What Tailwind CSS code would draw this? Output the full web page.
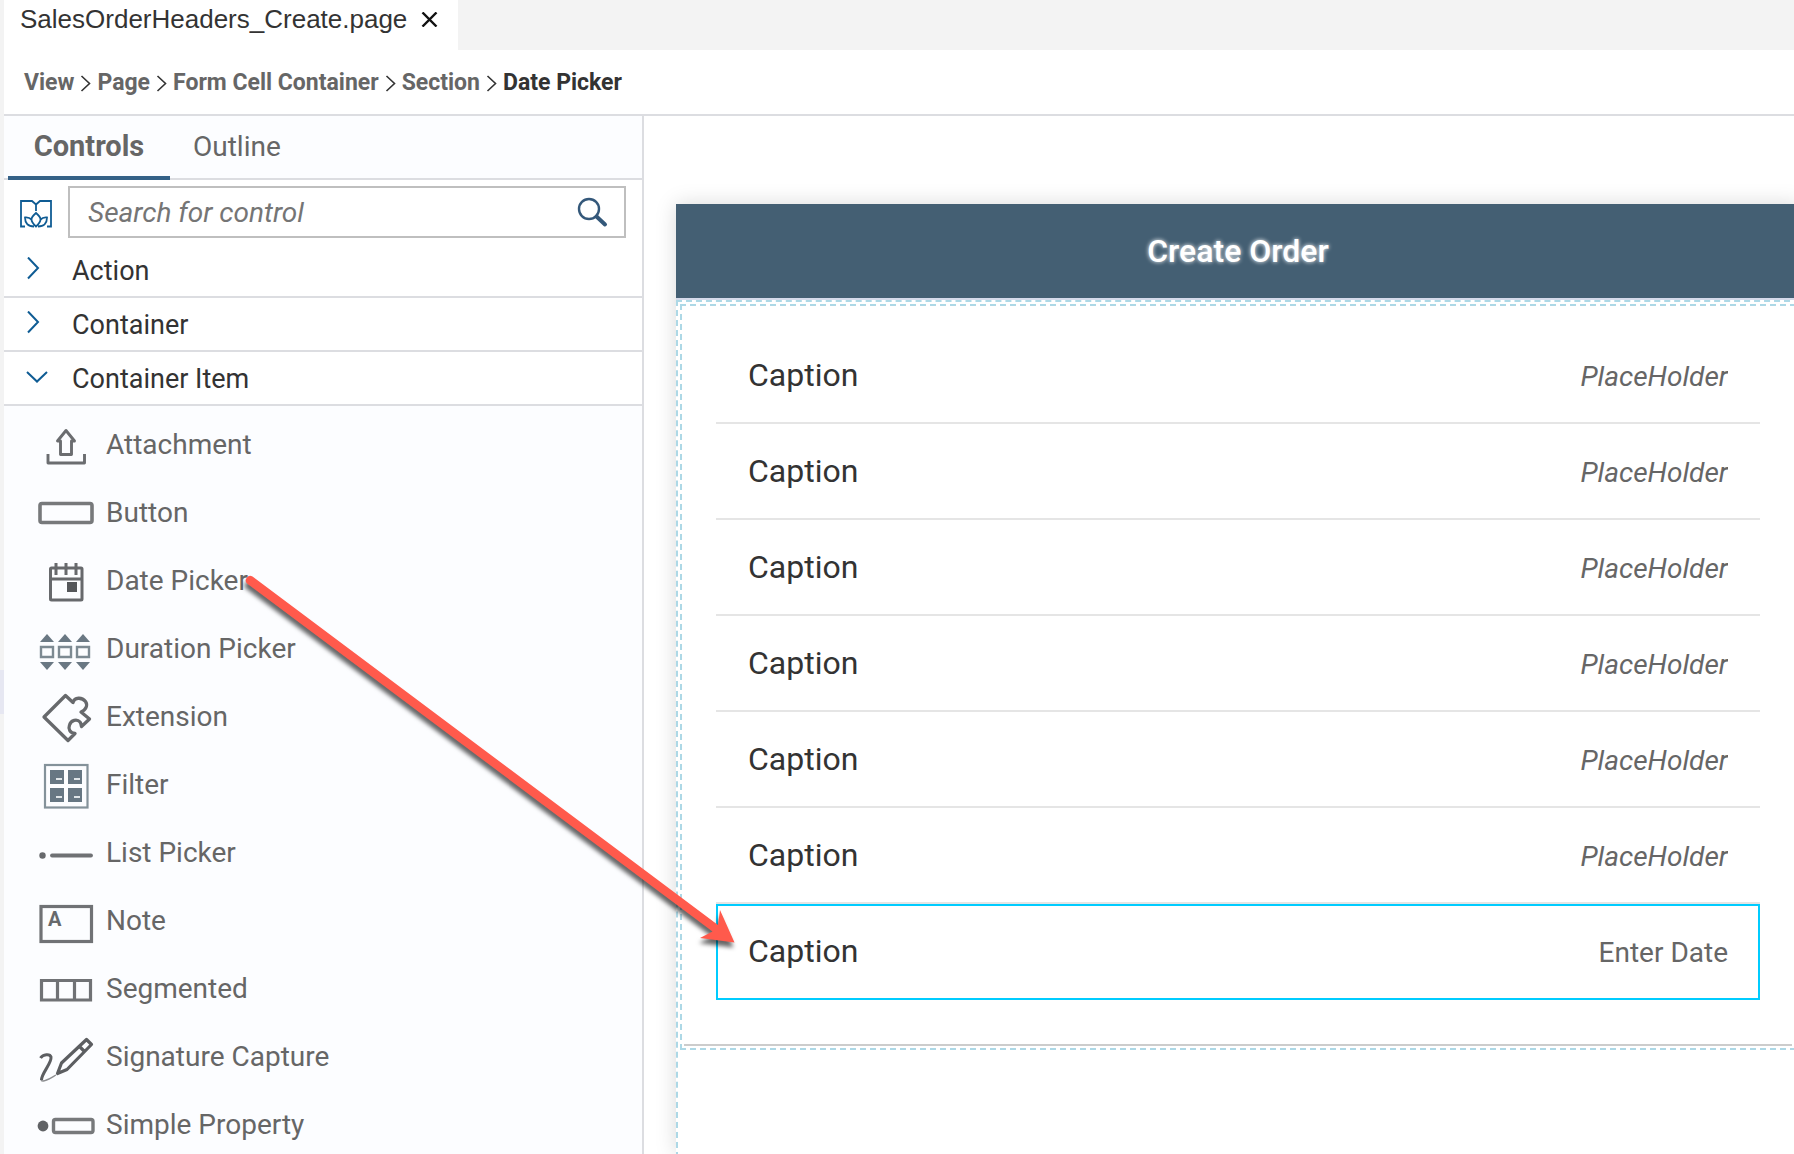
<!DOCTYPE html>
<html lang="en">
<head>
<meta charset="utf-8">
<title>SalesOrderHeaders_Create.page</title>
<script src="https://cdn.jsdelivr.net/npm/@tailwindcss/browser@4"></script>
</head>
<body class="h-screen overflow-hidden bg-white font-['Roboto',sans-serif] text-[#333]">
<div class="relative flex h-full">
  <!-- edge of the activity rail -->
  <div class="w-1 shrink-0 bg-[#f3f3f3] pt-[670px]"><div class="h-11 bg-[#e6e7f2]"></div></div>

  <div class="flex min-w-0 flex-1 flex-col">
    <header class="shrink-0">
      <div class="flex h-[50px] bg-[#f3f3f3]">
        <div class="flex w-[454px] items-start gap-3.5 bg-white pl-4">
          <span class="font-['Liberation_Sans',sans-serif] text-[26px] leading-[38px]">SalesOrderHeaders_Create.page</span>
          <button type="button" aria-label="Close tab" class="pt-3">
            <svg class="h-[15px] w-[17px]" viewBox="0 0 17 15" fill="none" stroke="#111" stroke-width="2.4"><path d="M1.5 0.5 15.5 14.5M15.5 0.5 1.5 14.5"/></svg>
          </button>
        </div>
      </div>
      <nav aria-label="Breadcrumb" class="flex h-[66px] items-center gap-1.5 border-b-2 border-[#dcdde1] pt-0.5 pl-5 text-[23px] leading-7 font-bold text-[#666]">
        <a href="#">View</a>
        <svg class="h-[17px] w-[11px]" viewBox="0 0 11 17" fill="none" stroke="#333" stroke-width="1.6"><path d="M1.5 1 9.5 8.5 1.5 16"/></svg>
        <a href="#">Page</a>
        <svg class="h-[17px] w-[11px]" viewBox="0 0 11 17" fill="none" stroke="#333" stroke-width="1.6"><path d="M1.5 1 9.5 8.5 1.5 16"/></svg>
        <a href="#">Form Cell Container</a>
        <svg class="h-[17px] w-[11px]" viewBox="0 0 11 17" fill="none" stroke="#333" stroke-width="1.6"><path d="M1.5 1 9.5 8.5 1.5 16"/></svg>
        <a href="#">Section</a>
        <svg class="h-[17px] w-[11px]" viewBox="0 0 11 17" fill="none" stroke="#333" stroke-width="1.6"><path d="M1.5 1 9.5 8.5 1.5 16"/></svg>
        <span aria-current="page" class="text-[#333]">Date Picker</span>
      </nav>
    </header>

    <div class="flex min-h-0 flex-1">
      <aside class="w-[640px] shrink-0 overflow-hidden border-r-2 border-[#dcdde1] bg-[#fcfdff]">
        <div role="tablist" class="flex h-16 border-b-2 border-[#dcdde1] pl-1 text-[28px] leading-8 text-[#666]">
          <button type="button" role="tab" aria-selected="true" class="-mb-0.5 w-[162px] border-b-4 border-[#346187] text-[29px] font-bold">Controls</button>
          <button type="button" role="tab" aria-selected="false" class="pl-[23px]">Outline</button>
        </div>

        <div class="bg-white">
          <div class="flex h-16 items-start gap-4 pt-1.5 pr-4 pl-4">
            <svg class="mt-3.5 h-8 w-8" viewBox="0 0 32 32" fill="none" stroke="#0f5c94" stroke-width="1.8"><path d="M5 26.5H1V1H12L16 4.5 20 1H31V26.5H27M16 4.5V11M16 26.5C10 21 10 18 16 13 22 18 22 21 16 26.5ZM14 26.5C8 26.500 5 23 5 17.5 8.5 17 10 18 12 20M18 26.5C24 26.500 27 23 27 17.5 23.5 17 22 18 20 20"/></svg>
            <div class="flex h-[52px] flex-1 items-center border-2 border-[#bfbfbf] bg-white">
              <input type="text" aria-label="Search for control" placeholder="Search for control" class="h-full min-w-0 flex-1 pl-[18px] text-[28px] italic outline-none placeholder:text-[#757575]">
              <button type="button" aria-label="Search" class="pr-4">
                <svg class="h-8 w-8" viewBox="0 0 32 32" fill="none" stroke="#34587a"><circle cx="13" cy="13" r="10" stroke-width="2.4"/><path d="M20.5 20.5 29 28.5" stroke-width="4" stroke-linecap="round"/></svg>
              </button>
            </div>
          </div>
          <button type="button" aria-expanded="false" class="flex h-[54px] w-full items-center gap-5 border-b-2 border-[#dcdde1] pt-0.5 pl-5 text-[27px] leading-8">
            <svg class="h-7 w-7" viewBox="0 1 28 28" fill="none" stroke="#0f5c94" stroke-width="2"><path d="M4 1.5 14 12 4 22.5"/></svg>Action
          </button>
          <button type="button" aria-expanded="false" class="flex h-[54px] w-full items-center gap-5 border-b-2 border-[#dcdde1] pt-0.5 pl-5 text-[27px] leading-8">
            <svg class="h-7 w-7" viewBox="0 1 28 28" fill="none" stroke="#0f5c94" stroke-width="2"><path d="M4 1.5 14 12 4 22.5"/></svg>Container
          </button>
          <button type="button" aria-expanded="true" class="flex h-[54px] w-full items-center gap-5 border-b-2 border-[#dcdde1] pt-0.5 pl-5 text-[27px] leading-8">
            <svg class="h-7 w-7" viewBox="0 1 28 28" fill="none" stroke="#0f5c94" stroke-width="2"><path d="M3 8 13 17.5 23 8"/></svg>Container Item
          </button>
        </div>

        <ul class="pt-[5px] text-[28px] leading-8 text-[#666]">
          <li class="flex h-[68px] items-center gap-[10px] pl-8">
            <svg class="h-[60px] w-[60px]" viewBox="0 1 60 60" fill="none" stroke="#6b6d70" stroke-width="2.9" stroke-linejoin="round"><path d="M30 16.500 38.500 27H35.500V40.500H24.500V27H21.500ZM12 40V49H48.500V40"/></svg>Attachment
          </li>
          <li class="flex h-[68px] items-center gap-[10px] pl-8">
            <svg class="h-[60px] w-[60px]" viewBox="0 1 60 60" fill="none" stroke="#77797b" stroke-width="3.6"><rect x="4" y="21.5" width="52" height="19" rx="2"/></svg>Button
          </li>
          <li class="flex h-[68px] items-center gap-[10px] pl-8">
            <svg class="h-[60px] w-[60px]" viewBox="0 1 60 60" fill="none" stroke="#67696c" stroke-width="3"><rect x="14.5" y="18" width="31.5" height="32" rx="1"/><path d="M14 29H46M20 13V25M30 13V25M40 13V25"/><path d="M31 32H41V42H31Z" fill="#55575a" stroke="none"/></svg>Date Picker
          </li>
          <li class="flex h-[68px] items-center gap-[10px] pl-8">
            <svg class="h-[60px] w-[60px]" viewBox="0 1 60 60" fill="none" stroke="#7d8a92" stroke-width="2.4"><path d="M5 29H17V39H5ZM23 29H35V39H23ZM41 29H53V39H41Z"/><path fill="#6a7883" stroke="none" d="M4 24 11 16 18 24ZM22 24 29 16 36 24ZM40 24 47 16 54 24ZM4 44 11 52 18 44ZM22 44 29 52 36 44ZM40 44 47 52 54 44Z"/></svg>Duration Picker
          </li>
          <li class="flex h-[68px] items-center gap-[10px] pl-8">
            <svg class="h-[60px] w-[60px]" viewBox="0 1 60 60" fill="none" stroke="#67696c" stroke-width="3.3" stroke-linejoin="round"><path d="M29.500 9.500 8 31 32 54.500 39 47.500C34 47 32 43 33.500 39 35 34 41 32.500 44 36 45.500 38 45 40 45.500 40.500L53.500 33 45 26C50 24 52 19 49.500 15.500 46 11 38.500 11 37 16.500Z"/></svg>Extension
          </li>
          <li class="flex h-[68px] items-center gap-[10px] pl-8">
            <svg class="h-[60px] w-[60px]" viewBox="0 1 60 60" fill="none"><rect x="9" y="11" width="42.5" height="42.5" stroke="#84929a" stroke-width="2.2"/><path fill="#677783" d="M14 16H28V30H14ZM32 16H46V30H32ZM14 34H28V48H14ZM32 34H46V48H32Z"/><path stroke="#dfe5e8" stroke-width="2" d="M20 25H26M38 25H44M20 43H26M38 43H44"/></svg>Filter
          </li>
          <li class="flex h-[68px] items-center gap-[10px] pl-8">
            <svg class="h-[60px] w-[60px]" viewBox="0 1 60 60" fill="none"><circle cx="6.5" cy="33.5" r="3.2" fill="#67696c"/><path stroke="#6f7174" stroke-width="3.8" stroke-linecap="round" d="M16 33.5H55"/></svg>List Picker
          </li>
          <li class="flex h-[68px] items-center gap-[10px] pl-8">
            <svg class="h-[60px] w-[60px]" viewBox="0 1 60 60" fill="none"><rect x="5" y="16.5" width="50.5" height="35" stroke="#707275" stroke-width="3.2"/><text x="12" y="36" font-size="20" font-weight="700" fill="#67696c">A</text></svg>Note
          </li>
          <li class="flex h-[68px] items-center gap-[10px] pl-8">
            <svg class="h-[60px] w-[60px]" viewBox="0 1 60 60" fill="none" stroke="#707275" stroke-width="3.2"><path d="M5.500 22.500H54.500V42H5.500ZM21.500 22.500V42M38.500 22.500V42"/></svg>Segmented
          </li>
          <li class="flex h-[68px] items-center gap-[10px] pl-8">
            <svg class="h-[60px] w-[60px]" viewBox="0 1 60 60" fill="none" stroke="#5c5e61" stroke-width="3.2" stroke-linejoin="round"><path d="M21.500 47.500 25.500 37 50.500 13.500 55.500 18.500 31 43.500ZM43.500 20.500 48.500 25.500"/><path stroke-width="3" d="M4.500 32C7 28 14 27.500 15 31 16 37 5 48 5.500 54"/><path stroke-width="1.4" stroke-opacity="0.7" d="M5 54C7 57 13 53 20 49"/></svg>Signature Capture
          </li>
          <li class="flex h-[68px] items-center gap-[10px] pl-8">
            <svg class="h-[60px] w-[60px]" viewBox="0 1 60 60" fill="none"><circle cx="7" cy="32" r="5.4" fill="#606265"/><rect x="17.5" y="25.5" width="39.5" height="13" rx="2" stroke="#77797b" stroke-width="3.4"/></svg>Simple Property
          </li>
        </ul>
      </aside>

      <!-- page canvas; the device frame runs on past the right edge -->
      <main class="min-w-0 flex-1 overflow-hidden pt-[88px] pl-8">
        <div class="-mr-1.5 flex h-full flex-col shadow-[0_0_20px_rgba(0,0,0,0.15)]">
          <h1 class="flex h-24 shrink-0 items-center justify-center border-b-2 border-[#d5daea] bg-[#445f73] text-[32px] leading-9 font-medium text-white [text-shadow:0_0_4px_#fff]">Create Order</h1>
          <div class="-mb-1 flex-1 border-2 border-dashed border-[#add8e6] bg-white p-0.5">
            <section class="border-2 border-dashed border-[#add8e6] px-0.5 pb-0.5">
              <div class="border-b-2 border-[#ccc] px-8 pt-[22px] pb-11">
                <label class="flex h-24 items-baseline justify-between border-b-2 border-[#e5e5e5] px-8 pt-7 text-[32px] leading-[38px]">Caption<input type="text" placeholder="PlaceHolder" class="w-80 text-right text-[28px] italic outline-none placeholder:text-[#666]"></label>
                <label class="flex h-24 items-baseline justify-between border-b-2 border-[#e5e5e5] px-8 pt-7 text-[32px] leading-[38px]">Caption<input type="text" placeholder="PlaceHolder" class="w-80 text-right text-[28px] italic outline-none placeholder:text-[#666]"></label>
                <label class="flex h-24 items-baseline justify-between border-b-2 border-[#e5e5e5] px-8 pt-7 text-[32px] leading-[38px]">Caption<input type="text" placeholder="PlaceHolder" class="w-80 text-right text-[28px] italic outline-none placeholder:text-[#666]"></label>
                <label class="flex h-24 items-baseline justify-between border-b-2 border-[#e5e5e5] px-8 pt-7 text-[32px] leading-[38px]">Caption<input type="text" placeholder="PlaceHolder" class="w-80 text-right text-[28px] italic outline-none placeholder:text-[#666]"></label>
                <label class="flex h-24 items-baseline justify-between border-b-2 border-[#e5e5e5] px-8 pt-7 text-[32px] leading-[38px]">Caption<input type="text" placeholder="PlaceHolder" class="w-80 text-right text-[28px] italic outline-none placeholder:text-[#666]"></label>
                <label class="flex h-24 items-baseline justify-between border-b-2 border-[#e5e5e5] px-8 pt-7 text-[32px] leading-[38px]">Caption<input type="text" placeholder="PlaceHolder" class="w-80 text-right text-[28px] italic outline-none placeholder:text-[#666]"></label>
                <label class="flex h-24 items-baseline justify-between border-2 border-[#0cf] px-[30px] pt-[26px] text-[32px] leading-[38px]">Caption<input type="text" placeholder="Enter Date" class="w-80 text-right text-[28px] outline-none placeholder:text-[#666]"></label>
              </div>
            </section>
          </div>
        </div>
      </main>
    </div>
  </div>

  <!-- drag arrow from the Date Picker control to the new form cell -->
  <svg class="pointer-events-none absolute top-[560px] left-[230px] h-[410px] w-[520px] drop-shadow-[-1px_5px_2px_rgba(0,0,0,0.6)]" viewBox="230 560 520 410" aria-hidden="true"><path fill="#ff5a4c" d="M252.500 576.500 718 925 720 910 734.500 942.500 700 938 712.500 931.500 247 583.500A4.500 4.500 0 0 1 252.500 576.500Z"/></svg>
</div>
</body>
</html>
